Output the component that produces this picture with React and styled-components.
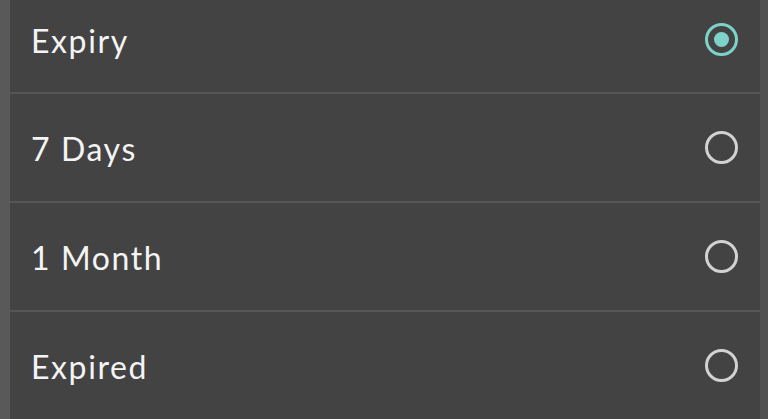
import React, { useState } from 'react';
import styled, { createGlobalStyle } from 'styled-components';

const Global = createGlobalStyle`
  html, body { margin: 0; padding: 0; background: #434343; overflow: hidden; }
  #root { height: 419px; }
`;

const Frame = styled.div`
  display: flex;
  height: 419px;
  background: #434343;
`;

const Edge = styled.div`
  width: ${p => p.w}px;
  background: ${p => p.bg};
  flex-shrink: 0;
`;

const List = styled.div`
  flex: 1;
  display: flex;
  flex-direction: column;
  background: #434343;
`;

const Row = styled.div`
  display: flex;
  align-items: center;
  justify-content: space-between;
  height: ${p => (p.first ? 79 : 107)}px;
  padding: 0 22px ${p => (p.first ? 13 : 0)}px 21px;
  border-top: ${p => (p.first ? 'none' : '2px solid #565656')};
  box-sizing: content-box;
  flex-shrink: 0;
  cursor: pointer;
`;

const Label = styled.span`
  font-family: 'Lato', 'Noto Sans', sans-serif;
  font-size: 32px;
  color: #f4f4f4;
  letter-spacing: 1.6px;
  margin-top: 2px;
`;

const Radio = styled.span`
  width: 27px;
  height: 27px;
  border-radius: 50%;
  border: 3px solid ${p => (p.on ? '#7dd3c9' : '#d2d2d2')};
  display: flex;
  align-items: center;
  justify-content: center;
  &::after {
    content: '';
    width: 15px;
    height: 15px;
    border-radius: 50%;
    background: ${p => (p.on ? '#7dd3c9' : 'transparent')};
  }
`;

const options = ['Expiry', '7 Days', '1 Month', 'Expired'];

export default function App() {
  const [picked, setPicked] = useState(0);
  return (
    <Frame>
      <Global />
      <Edge w={10} bg="#595959" />
      <List>
        {options.map((o, i) => (
          <Row key={o} first={i === 0} onClick={() => setPicked(i)}>
            <Label>{o}</Label>
            <Radio on={picked === i} />
          </Row>
        ))}
      </List>
      <Edge w={8} bg="#505050" />
    </Frame>
  );
}
